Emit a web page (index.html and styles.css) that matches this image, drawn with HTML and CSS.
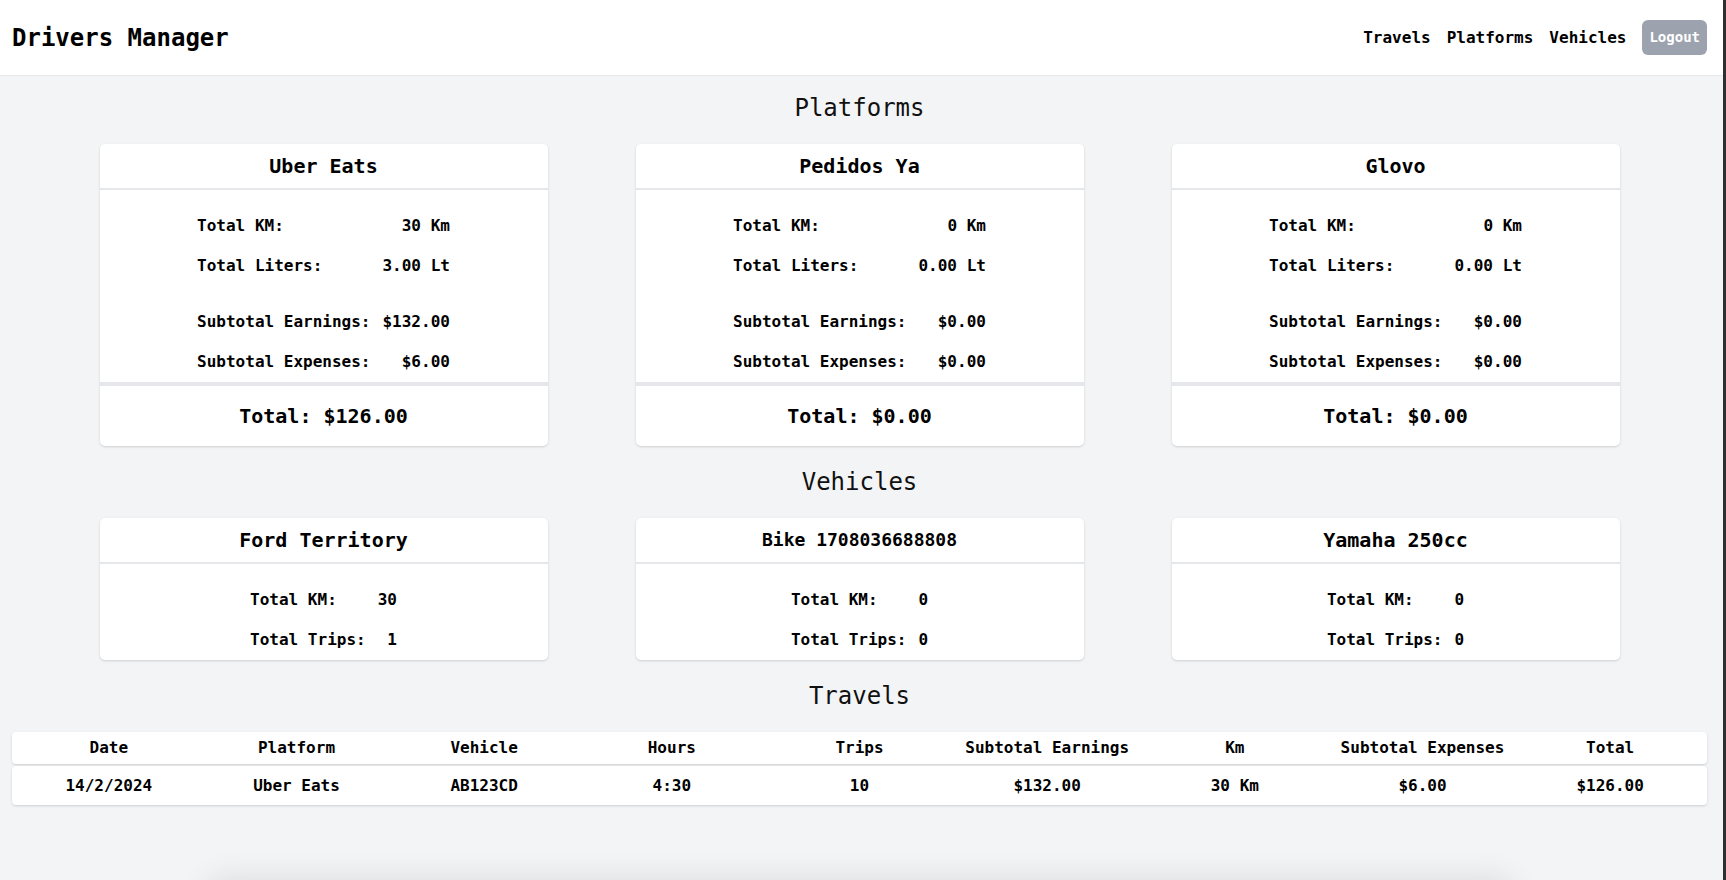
FILE: index.html
```html
<!DOCTYPE html>
<html lang="en">
<head>
<meta charset="utf-8">
<title>Drivers Manager</title>
<link rel="stylesheet" href="styles.css">
</head>
<body>
<div class="app">
  <header class="topbar">
    <h1 class="brand">Drivers Manager</h1>
    <nav class="nav">
      <a class="nav-link" href="#">Travels</a>
      <a class="nav-link" href="#">Platforms</a>
      <a class="nav-link" href="#">Vehicles</a>
      <button class="logout" type="button">Logout</button>
    </nav>
  </header>

  <main class="content">
    <h2 class="section-title">Platforms</h2>
    <div class="cards">
      <article class="card">
        <div class="card-head">Uber Eats</div>
        <div class="card-body">
          <div class="stats">
            <span class="label">Total KM:</span><span class="value">30 Km</span>
            <span class="label">Total Liters:</span><span class="value">3.00 Lt</span>
            <span class="label group-start">Subtotal Earnings:</span><span class="value group-start">$132.00</span>
            <span class="label">Subtotal Expenses:</span><span class="value">$6.00</span>
          </div>
        </div>
        <div class="card-total">Total: $126.00</div>
      </article>
      <article class="card">
        <div class="card-head">Pedidos Ya</div>
        <div class="card-body">
          <div class="stats">
            <span class="label">Total KM:</span><span class="value">0 Km</span>
            <span class="label">Total Liters:</span><span class="value">0.00 Lt</span>
            <span class="label group-start">Subtotal Earnings:</span><span class="value group-start">$0.00</span>
            <span class="label">Subtotal Expenses:</span><span class="value">$0.00</span>
          </div>
        </div>
        <div class="card-total">Total: $0.00</div>
      </article>
      <article class="card">
        <div class="card-head">Glovo</div>
        <div class="card-body">
          <div class="stats">
            <span class="label">Total KM:</span><span class="value">0 Km</span>
            <span class="label">Total Liters:</span><span class="value">0.00 Lt</span>
            <span class="label group-start">Subtotal Earnings:</span><span class="value group-start">$0.00</span>
            <span class="label">Subtotal Expenses:</span><span class="value">$0.00</span>
          </div>
        </div>
        <div class="card-total">Total: $0.00</div>
      </article>
    </div>

    <h2 class="section-title">Vehicles</h2>
    <div class="cards">
      <article class="card">
        <div class="card-head">Ford Territory</div>
        <div class="card-body">
          <div class="stats">
            <span class="label">Total KM:</span><span class="value">30</span>
            <span class="label">Total Trips:</span><span class="value">1</span>
          </div>
        </div>
      </article>
      <article class="card">
        <div class="card-head card-head-small">Bike 1708036688808</div>
        <div class="card-body">
          <div class="stats">
            <span class="label">Total KM:</span><span class="value">0</span>
            <span class="label">Total Trips:</span><span class="value">0</span>
          </div>
        </div>
      </article>
      <article class="card">
        <div class="card-head">Yamaha 250cc</div>
        <div class="card-body">
          <div class="stats">
            <span class="label">Total KM:</span><span class="value">0</span>
            <span class="label">Total Trips:</span><span class="value">0</span>
          </div>
        </div>
      </article>
    </div>

    <h2 class="section-title">Travels</h2>
    <div class="travels">
      <div class="trow trow-head">
        <span>Date</span><span>Platform</span><span>Vehicle</span><span>Hours</span><span>Trips</span><span>Subtotal Earnings</span><span>Km</span><span>Subtotal Expenses</span><span>Total</span>
      </div>
      <div class="trow trow-body">
        <span>14/2/2024</span><span>Uber Eats</span><span>AB123CD</span><span>4:30</span><span>10</span><span>$132.00</span><span>30 Km</span><span>$6.00</span><span>$126.00</span>
      </div>
    </div>

    <div class="footer-shadow"></div>
  </main>
</div>
</body>
</html>
```

FILE: styles.css
```css
* {
  box-sizing: border-box;
}

html,
body {
  margin: 0;
  padding: 0;
  height: 100%;
  overflow: hidden;
}

body {
  font-family: "DejaVu Sans Mono", "Liberation Mono", monospace;
  color: #111;
  background: #f3f4f6;
}

.app {
  height: 100vh;
  overflow: hidden;
  border-right: 3px solid #2f2f2f;
  background: #f3f4f6;
}

.topbar {
  height: 76px;
  display: flex;
  align-items: center;
  justify-content: space-between;
  padding: 0 16px 0 12px;
  background: #fff;
  border-bottom: 1px solid #e5e7eb;
}

.brand {
  margin: 0;
  font-size: 24px;
  line-height: 32px;
  font-weight: 700;
  color: #000;
}

.nav {
  display: flex;
  align-items: center;
  gap: 16px;
}

.nav-link {
  font-size: 16px;
  line-height: 24px;
  font-weight: 700;
  color: #000;
  text-decoration: none;
}

.logout {
  font-family: inherit;
  font-size: 14px;
  line-height: 19px;
  font-weight: 700;
  color: #fff;
  background: #9ca3af;
  border: none;
  border-radius: 6px;
  padding: 8px 7px;
}

.content {
  display: flex;
  flex-direction: column;
  gap: 20px;
  padding: 16px 16px 0 12px;
}

.section-title {
  margin: 0;
  text-align: center;
  font-size: 24px;
  line-height: 32px;
  font-weight: 400;
  color: #111;
}

.cards {
  display: grid;
  grid-template-columns: repeat(3, 448px);
  column-gap: 88px;
  justify-content: center;
  align-items: start;
}

.card {
  background: #fff;
  border-radius: 5px;
  box-shadow: 0 1px 3px rgba(0, 0, 0, 0.1), 0 1px 2px rgba(0, 0, 0, 0.06);
  overflow: hidden;
}

.card-head {
  padding: 8px 12px;
  text-align: center;
  font-size: 20px;
  line-height: 28px;
  font-weight: 700;
  color: #000;
  border-bottom: 2px solid #e5e7eb;
}

.card-head-small {
  font-size: 18px;
}

.card-body {
  padding: 16px 0 0;
}

.stats {
  display: grid;
  grid-template-columns: auto auto;
  column-gap: 12px;
  justify-content: center;
}

.label,
.value {
  padding: 8px 0;
  font-size: 16px;
  line-height: 24px;
  font-weight: 700;
  color: #000;
}

.value {
  text-align: right;
}

.group-start {
  margin-top: 16px;
}

.card-total {
  border-top: 4px solid #e5e7eb;
  padding: 16px;
  text-align: center;
  font-size: 20px;
  line-height: 28px;
  font-weight: 700;
  color: #000;
}

.travels {
  display: flex;
  flex-direction: column;
  gap: 2px;
}

.trow {
  display: grid;
  grid-template-columns: repeat(9, 1fr);
  padding: 0 3px;
  background: #fff;
  border-radius: 4px;
  box-shadow: 0 1px 3px rgba(0, 0, 0, 0.1), 0 1px 2px rgba(0, 0, 0, 0.06);
}

.trow span {
  text-align: center;
  font-size: 16px;
  line-height: 24px;
  font-weight: 700;
  color: #000;
  white-space: nowrap;
}

.trow-head span {
  padding: 4px 0;
}

.trow-body span {
  padding: 8px 0 7px;
}

.footer-shadow {
  align-self: center;
  flex-shrink: 0;
  width: 1300px;
  height: 120px;
  margin-top: 60px;
  background: #f3f4f6;
  border-radius: 12px;
  box-shadow: 0 -4px 30px 4px rgba(0, 0, 0, 0.09);
}
```
